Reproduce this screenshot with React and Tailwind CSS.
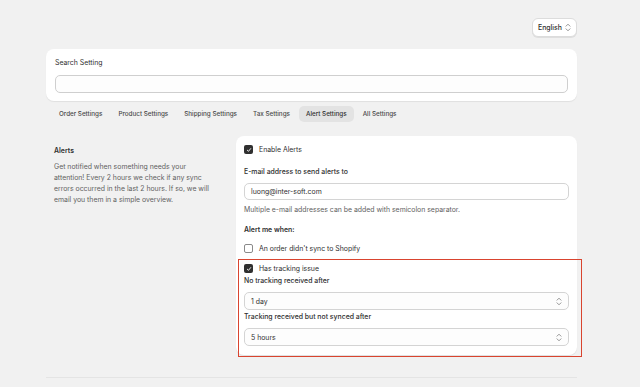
import React from "react";

function UpDown({ className = "" }) {
  return (
    <svg className={className} width="6" height="9" viewBox="0 0 6 9" fill="none">
      <path d="M1 3.2 L3 1.2 L5 3.2" stroke="#8a8a8a" strokeWidth="0.9" strokeLinecap="round" strokeLinejoin="round" />
      <path d="M1 5.8 L3 7.8 L5 5.8" stroke="#8a8a8a" strokeWidth="0.9" strokeLinecap="round" strokeLinejoin="round" />
    </svg>
  );
}

function Check({ checked }) {
  if (!checked) {
    return <div className="w-[9px] h-[9px] rounded-[2px] border border-[#8a8a8a] bg-white shrink-0" />;
  }
  return (
    <div className="w-[9px] h-[9px] rounded-[2px] bg-[#303030] flex items-center justify-center shrink-0">
      <svg width="6" height="6" viewBox="0 0 6 6" fill="none">
        <path d="M1.3 3.2 L2.5 4.3 L4.7 1.6" stroke="white" strokeWidth="0.9" strokeLinecap="round" strokeLinejoin="round" />
      </svg>
    </div>
  );
}

function Select({ value }) {
  return (
    <div className="h-[18px] rounded-[5px] border border-[#d4d4d4] bg-[#fdfdfd] flex items-center justify-between pl-[6px] pr-[6px]">
      <span>{value}</span>
      <UpDown />
    </div>
  );
}

export default function App() {
  const tabs = ["Order Settings", "Product Settings", "Shipping Settings", "Tax Settings", "Alert Settings", "All Settings"];
  return (
    <div className="min-h-screen bg-[#f1f1f1] font-['Inter',sans-serif] text-[#303030] text-[6.9px] leading-[11px]">
      <div className="ml-[46px] w-[531px] pt-[18px]">
        <div className="flex justify-end">
          <div className="h-[19px] w-[45px] rounded-[6px] bg-white border border-[#dcdcdc] shadow-[0_1px_0_rgba(0,0,0,0.08)] flex items-center justify-center gap-[3px] font-medium">
            <span>English</span>
            <UpDown />
          </div>
        </div>

        <div className="mt-[12px] rounded-[8px] bg-white shadow-[0_1px_1px_rgba(0,0,0,0.07)] px-[9px] pt-[7.5px] pb-[8px]">
          <div>Search Setting</div>
          <div className="mt-[7.5px] h-[18px] rounded-[5px] border border-[#cfcfcf] bg-[#fdfdfd]" />
        </div>

        <div className="mt-[5px] ml-[6px] flex gap-[2px]">
          {tabs.map((t) => (
            <div
              key={t}
              className={
                "h-[16px] px-[7px] rounded-[5px] flex items-center font-medium text-[6.3px] " +
                (t === "Alert Settings" ? "bg-[#e3e3e3] text-[#303030]" : "text-[#4a4a4a]")
              }
            >
              {t}
            </div>
          ))}
        </div>

        <div className="mt-[14px] flex">
          <div className="w-[190px] pl-[8px] pt-[8.5px]">
            <div className="font-semibold">Alerts</div>
            <div className="mt-[5px] text-[#616161] w-[158px]">
              Get notified when something needs your attention! Every 2 hours we check if any sync errors occurred in the last 2 hours. If so, we will email you them in a simple overview.
            </div>
          </div>

          <div className="relative w-[341px] rounded-[8px] bg-white shadow-[0_1px_1px_rgba(0,0,0,0.07)] px-[8px] pt-[8px] pb-[9px]">
            <div className="flex items-center gap-[6px] h-[11px]">
              <Check checked />
              <span>Enable Alerts</span>
            </div>
            <div className="mt-[10.5px] font-medium">E-mail address to send alerts to</div>
            <div className="mt-[6.5px] h-[17px] rounded-[5px] border border-[#d4d4d4] bg-white flex items-center pl-[6px]">
              luong@inter-soft.com
            </div>
            <div className="mt-[3.5px] text-[#616161]">Multiple e-mail addresses can be added with semicolon separator.</div>
            <div className="mt-[9px] font-semibold">Alert me when:</div>
            <div className="mt-[8.5px] flex items-center gap-[6px] h-[11px]">
              <Check />
              <span>An order didn't sync to Shopify</span>
            </div>
            <div className="mt-[9px] flex items-center gap-[6px] h-[11px]">
              <Check checked />
              <span>Has tracking issue</span>
            </div>
            <div className="mt-[0.5px] font-medium">No tracking received after</div>
            <div className="mt-[6.5px]">
              <Select value="1 day" />
            </div>
            <div className="mt-[0.5px] font-medium">Tracking received but not synced after</div>
            <div className="mt-[6.5px]">
              <Select value="5 hours" />
            </div>

            <div className="absolute left-[2px] top-[123px] w-[344px] h-[98px] border-[1.5px] border-[#d9442f] pointer-events-none" />
          </div>
        </div>

        <div className="mt-[22px] h-px bg-[#e4e4e4]" />
      </div>
    </div>
  );
}
